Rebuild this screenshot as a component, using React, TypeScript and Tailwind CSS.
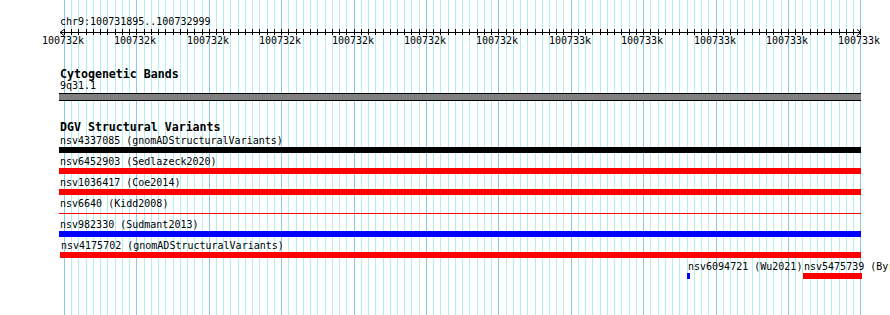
import React from 'react';

// view geometry in page pixels
const VIEW_LEFT = 59;
const VIEW_RIGHT = 861;
const MAJOR0 = 64;
const MAJOR_STEP = 72.39;
const MINOR_STEP = MAJOR_STEP / 10;

const minors = Array.from({ length: 111 }, (_, k) => Math.round(MAJOR0 + k * MINOR_STEP));
const majors = Array.from({ length: 12 }, (_, i) => Math.round(MAJOR0 + i * MAJOR_STEP));
const majorLabels = [
  '100732k', '100732k', '100732k', '100732k', '100732k', '100732k',
  '100732k', '100733k', '100733k', '100733k', '100733k', '100733k',
];

type Feature = {
  name: string;
  source: string;
  color: string;
  start: number;
  end: number;
  thin?: boolean;
};

const rows: Feature[][] = [
  [{ name: 'nsv4337085', source: 'gnomADStructuralVariants', color: 'bg-black', start: VIEW_LEFT, end: VIEW_RIGHT }],
  [{ name: 'nsv6452903', source: 'Sedlazeck2020', color: 'bg-[#ff0000]', start: VIEW_LEFT, end: VIEW_RIGHT }],
  [{ name: 'nsv1036417', source: 'Coe2014', color: 'bg-[#ff0000]', start: VIEW_LEFT, end: VIEW_RIGHT }],
  [{ name: 'nsv6640', source: 'Kidd2008', color: 'bg-[#ff0000]', start: VIEW_LEFT, end: VIEW_RIGHT, thin: true }],
  [{ name: 'nsv982330', source: 'Sudmant2013', color: 'bg-[#0000ff]', start: VIEW_LEFT, end: VIEW_RIGHT }],
  [{ name: 'nsv4175702', source: 'gnomADStructuralVariants', color: 'bg-[#ff0000]', start: VIEW_LEFT + 1, end: VIEW_RIGHT }],
  [
    { name: 'nsv6094721', source: 'Wu2021', color: 'bg-[#0000ff]', start: 687, end: 690 },
    { name: 'nsv5475739', source: 'Byrska-Bishop2022', color: 'bg-[#ff0000]', start: 803, end: 862 },
  ],
];

const GridLines = () => (
  <svg className="absolute inset-0" width={890} height={315} shapeRendering="crispEdges">
    {minors.map((x, i) => (
      <line key={`m${i}`} x1={x + 0.5} x2={x + 0.5} y1={0} y2={315} stroke="#b0eef2" strokeWidth={1} />
    ))}
    {majors.map((x, i) => (
      <line key={`M${i}`} x1={x + 0.5} x2={x + 0.5} y1={0} y2={315} stroke="#86c8ee" strokeWidth={1} />
    ))}
  </svg>
);

const Axis = () => (
  <svg className="block overflow-visible" width={890} height={6} shapeRendering="crispEdges">
    <line x1={VIEW_LEFT + 1} x2={VIEW_RIGHT} y1={4.5} y2={4.5} stroke="#000" />
    {minors.map((x, i) => (
      <line key={i} x1={x + 0.5} x2={x + 0.5} y1={1} y2={7} stroke="#000" />
    ))}
    <polyline points={`${VIEW_LEFT + 5},1.5 ${VIEW_LEFT + 1},4.5 ${VIEW_LEFT + 5},7.5`} fill="none" stroke="#000" shapeRendering="auto" />
    <polyline points={`${VIEW_RIGHT - 4},1.5 ${VIEW_RIGHT},4.5 ${VIEW_RIGHT - 4},7.5`} fill="none" stroke="#000" shapeRendering="auto" />
  </svg>
);

const FeatureRow = ({ features }: { features: Feature[] }) => (
  <div className="relative h-[21px]">
    {features.map((f) => (
      <div key={f.name} className="absolute top-0" style={{ left: f.start }}>
        <div className="pl-px h-[12px] leading-[12px] whitespace-nowrap">
          {f.name} ({f.source})
        </div>
        {f.thin ? (
          <div className="h-[6px] flex items-center" style={{ width: f.end - f.start }}>
            <div className={`h-px w-full ${f.color}`} />
          </div>
        ) : (
          <div className={`h-[6px] ${f.color}`} style={{ width: f.end - f.start }} />
        )}
      </div>
    ))}
  </div>
);

export default function App() {
  return (
    <div
      className="relative w-[890px] h-[315px] overflow-hidden bg-white text-black text-[10px]"
      style={{ fontFamily: '"DejaVu Sans Mono", "Liberation Mono", monospace' }}
    >
      <GridLines />
      <div className="relative pt-[16px]">
        {/* ruler */}
        <div className="pl-[60px] h-[12px] leading-[12px]">chr9:100731895..100732999</div>
        <Axis />
        <div className="relative mt-px h-[12px] leading-[12px]">
          {majors.map((x, i) => (
            <span key={i} className="absolute top-0 -translate-x-1/2 whitespace-nowrap" style={{ left: x - 1 }}>
              {majorLabels[i]}
            </span>
          ))}
        </div>

        {/* cytogenetic bands */}
        <div className="mt-[21px] pl-[59px]">
          <div className="pl-px h-[12px] leading-[12px] text-[11.6px] font-bold">Cytogenetic Bands</div>
          <div className="pl-px h-[12px] leading-[12px]">9q31.1</div>
          <div className="mt-[1px] h-[8px] w-[802px] border-y border-black bg-[#808080]" />
        </div>

        {/* DGV */}
        <div className="mt-[20px]">
          <div className="pl-[60px] h-[12px] leading-[12px] text-[11.6px] font-bold">DGV Structural Variants</div>
          <div className="mt-[2px]">
            {rows.map((r, i) => (
              <FeatureRow key={i} features={r} />
            ))}
          </div>
        </div>
      </div>
    </div>
  );
}
